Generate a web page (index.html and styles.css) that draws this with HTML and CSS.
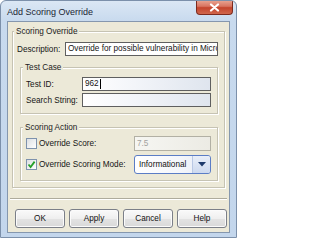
FILE: index.html
```html
<!DOCTYPE html>
<html>
<head>
<meta charset="utf-8">
<link rel="stylesheet" href="styles.css">
</head>
<body>
<div class="window">
  <div class="titlebar">
    <div class="title">Add Scoring Override</div>
    <div class="close">
      <svg width="11" height="9" viewBox="0 0 11 9"><path d="M2 1.5 L9 7.5 M9 1.5 L2 7.5" stroke="#fff" stroke-width="2.2" stroke-linecap="round"/></svg>
    </div>
  </div>
  <div class="client">
    <fieldset class="group outer">
      <legend class="legend">Scoring Override</legend>
      <div class="row">
        <span class="lbl desc-lbl">Description:</span>
        <div class="field desc">Override for possible vulnerability in Microsoft Windows</div>
      </div>
      <fieldset class="group inner testcase">
        <legend class="legend">Test Case</legend>
        <div class="rows">
          <div class="row">
            <span class="lbl tc-lbl">Test ID:</span>
            <div class="field grad">962<span class="caret"></span></div>
          </div>
          <div class="row">
            <span class="lbl tc-lbl">Search String:</span>
            <div class="field grad"></div>
          </div>
        </div>
      </fieldset>
      <fieldset class="group inner action">
        <legend class="legend">Scoring Action</legend>
        <div class="row r1">
          <span class="chk"></span>
          <span class="lbl sa-lbl">Override Score:</span>
          <div class="field disabled">7.5</div>
        </div>
        <div class="row r2">
          <span class="chk">
            <svg width="9" height="9" viewBox="0 0 9 9"><path d="M1.5 4.5 L3.6 7 L7.6 1.6" fill="none" stroke="#27a02a" stroke-width="1.8"/></svg>
          </span>
          <span class="lbl sa-lbl">Override Scoring Mode:</span>
          <div class="combo">
            <span class="combo-text">Informational</span>
            <span class="combo-btn">
              <svg width="8" height="5" viewBox="0 0 8 5"><path d="M0 0 H8 L4 4.5 Z" fill="#1d3a6b"/></svg>
            </span>
          </div>
        </div>
      </fieldset>
    </fieldset>
    <div class="sep"></div>
    <div class="buttons">
      <div class="btn">OK</div>
      <div class="btn">Apply</div>
      <div class="btn">Cancel</div>
      <div class="btn">Help</div>
    </div>
  </div>
</div>
</body>
</html>
```
FILE: styles.css
```css
html, body {
  margin: 0;
  padding: 0;
  background: #ffffff;
}
body {
  font-family: "Liberation Sans", Arial, sans-serif;
  font-size: 8.2px;
  color: #151515;
}
.window {
  width: 237px;
  height: 238px;
  box-sizing: border-box;
  border: 1px solid #7c90aa;
  border-radius: 6px 6px 0 0;
  background: linear-gradient(#dbe7f4, #c8daee 20px, #c3d6ec);
  padding: 0 6px 4px 6px;
  display: flex;
  flex-direction: column;
  overflow: hidden;
}
.titlebar {
  height: 20px;
  flex: none;
  display: flex;
  justify-content: space-between;
  align-items: flex-start;
}
.title {
  font-size: 9px;
  line-height: 11px;
  margin-top: 6px;
  color: #1a2533;
}
.close {
  width: 37px;
  height: 15px;
  margin: -1px -3px 0 0;
  box-sizing: border-box;
  border: 1px solid #7d2a1d;
  border-top: none;
  border-radius: 0 0 4px 4px;
  background: linear-gradient(#eaa996, #d97460 45%, #c4442c 55%, #d0674c);
  display: flex;
  align-items: center;
  justify-content: center;
}
.client {
  flex: 1;
  border: 1px solid #8597ae;
  background: #ece9d8;
  display: flex;
  flex-direction: column;
}
.group {
  border: 1px solid #c6c3b3;
  box-shadow: inset 1px 1px 0 #ffffff, 1px 1px 0 #ffffff;
  min-inline-size: 0;
}
.legend {
  font-size: 8.2px;
  line-height: 11px;
  padding: 0 2px;
  margin-left: -3px;
  background: #ece9d8;
  color: #222;
}
.outer {
  margin: 4px 4px 0 4px;
  padding: 5px 6px 6px 4px;
}
.inner {
  margin: 6px 0 0 3px;
}
.testcase {
  padding: 4px 6px 6px 5px;
}
.action {
  margin-top: 8px;
  padding: 3px 6px 6px 5px;
}
.row {
  display: flex;
  align-items: center;
  height: 14px;
}
.rows {
  display: flex;
  flex-direction: column;
  gap: 2px;
}
.lbl {
  white-space: nowrap;
  flex: none;
}
.desc-lbl { width: 48px; }
.tc-lbl { width: 56px; }
.sa-lbl { width: 95px; }
.field {
  height: 14px;
  box-sizing: border-box;
  border: 1px solid #5f5f5f;
  background: #ffffff;
  padding-left: 2px;
  line-height: 12px;
  white-space: nowrap;
  overflow: hidden;
  display: flex;
  align-items: center;
}
.desc { flex: 1; }
.grad {
  flex: 1;
  background: linear-gradient(to right, #ffffff, #f3f5f9 40%, #dfe5ee);
}
.caret {
  display: inline-block;
  width: 1px;
  height: 10px;
  background: #000;
  margin-left: 1px;
}
.r1 { height: 15px; }
.r1 .field { height: 15px; }
.r2 { height: 19px; margin-top: 4px; }
.chk {
  width: 11px;
  height: 11px;
  box-sizing: border-box;
  border: 1px solid #7e92ad;
  background: linear-gradient(135deg, #dcdfe3, #ffffff);
  margin-right: 2px;
  display: flex;
  align-items: center;
  justify-content: center;
  flex: none;
}
.disabled {
  width: 77px;
  flex: none;
  border-color: #b2b0a4;
  background: linear-gradient(to right, #f6f6f2, #ecebe4);
  color: #a3a3a0;
}
.combo {
  width: 77px;
  height: 19px;
  box-sizing: border-box;
  border: 1px solid #5b7dc6;
  border-radius: 3px;
  background: linear-gradient(to right, #ffffff, #f4f6fb 60%, #e4eaf5);
  display: flex;
  align-items: stretch;
  flex: none;
  overflow: hidden;
}
.combo-text {
  flex: 1;
  padding-left: 4px;
  display: flex;
  align-items: center;
  color: #111;
}
.combo-btn {
  width: 17px;
  border-left: 1px solid #b9c8e4;
  background: linear-gradient(#e9eff9, #cdd9ef);
  display: flex;
  align-items: center;
  justify-content: center;
}
.sep {
  margin: 10px 2px 0 2px;
  border-top: 1px solid #aeab9c;
  border-bottom: 1px solid #ffffff;
}
.buttons {
  margin-top: 9px;
  padding-right: 2px;
  display: flex;
  justify-content: flex-end;
  gap: 4px;
}
.btn {
  width: 50px;
  height: 19px;
  box-sizing: border-box;
  border: 1px solid #7b7f88;
  border-radius: 3px;
  background: linear-gradient(#fafafa, #efefef 50%, #e3e3e3 51%, #d9d9d9);
  box-shadow: inset 0 0 0 1px #fbfbfb;
  display: flex;
  align-items: center;
  justify-content: center;
  color: #111;
}
```
